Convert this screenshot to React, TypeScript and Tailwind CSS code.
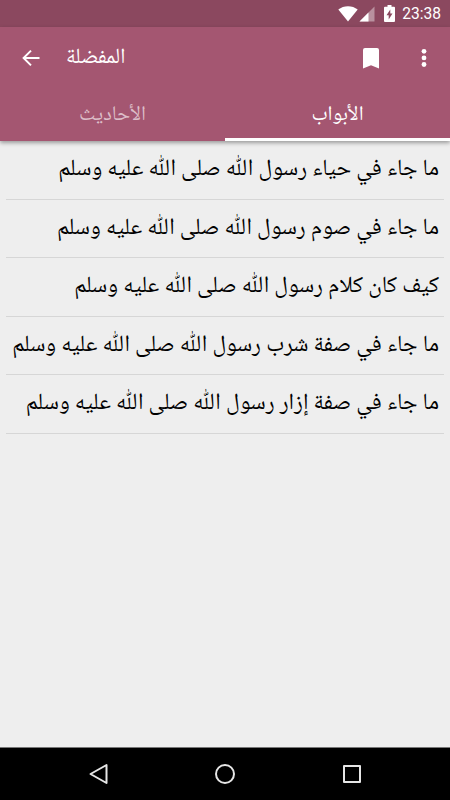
interface TabProps {
  label: string;
  active?: boolean;
}

const chapters: string[] = [
  "ما جاء في حياء رسول اللّٰه صلى اللّٰه عليه وسلم",
  "ما جاء في صوم رسول اللّٰه صلى اللّٰه عليه وسلم",
  "كيف كان كلام رسول اللّٰه صلى اللّٰه عليه وسلم",
  "ما جاء في صفة شرب رسول اللّٰه صلى اللّٰه عليه وسلم",
  "ما جاء في صفة إزار رسول اللّٰه صلى اللّٰه عليه وسلم",
];

function StatusBar() {
  return (
    <div className="flex h-[27px] shrink-0 items-center justify-end bg-[#8b485f] pr-[9px] text-white">
      <svg width="20" height="16" viewBox="0 0 20 16" fill="currentColor">
        <path d="M10 15.5 0.3 3.6C3 1.5 6.4 0.3 10 0.3s7 1.2 9.7 3.3z" />
      </svg>
      <svg className="ml-[1px]" width="16" height="16" viewBox="0 0 16 16" fill="currentColor">
        <path d="M15.5 0.5v15H0.5z" opacity="0.4" />
        <path d="M9.5 6.5v9h-9z" />
      </svg>
      <svg className="ml-[9px]" width="11" height="17" viewBox="0 0 11 17">
        <path d="M3.5 0h4v1.8H10q1 0 1 1V16q0 1-1 1H1q-1 0-1-1V2.8q0-1 1-1h2.5z" fill="white" />
        <path d="M6.3 4.5v4h2.2l-3.8 6v-4.3H2.5z" fill="#8b485f" />
      </svg>
      <span className="ml-[7px] pt-[2px] font-[Roboto,sans-serif] text-[15.6px] leading-none">
        23:38
      </span>
    </div>
  );
}

function Toolbar() {
  return (
    <div className="flex h-[62px] shrink-0 items-center pr-[16px] pl-[19px] text-white">
      <svg width="24" height="24" viewBox="0 0 24 24" fill="currentColor">
        <path d="M20.5 11H7l5.7-5.7-1.4-1.4L3.2 12l8.1 8.1 1.4-1.4L7 13h13.5z" />
      </svg>
      <h1 className="ml-[23px] flex-1 pt-px text-left text-[21.8px] leading-[30px]" dir="rtl">
        المفضلة
      </h1>
      <svg width="16" height="21" viewBox="0 0 16 21" fill="currentColor">
        <path d="M2 0h12q2 0 2 2v18.5l-8-3.3-8 3.3V2q0-2 2-2z" />
      </svg>
      <svg className="ml-[35px]" width="20" height="20" viewBox="0 0 20 20" fill="currentColor">
        <circle cx="10" cy="3.3" r="2.4" />
        <circle cx="10" cy="9.9" r="2.4" />
        <circle cx="10" cy="16.5" r="2.4" />
      </svg>
    </div>
  );
}

function Tab({ label, active }: TabProps) {
  return (
    <div
      className={
        active
          ? "flex flex-1 justify-center border-b-[3px] border-white pt-[12px] text-white"
          : "flex flex-1 justify-center border-b-[3px] border-transparent pt-[12px] text-[#dcbdc8]"
      }
    >
      <span className="text-[20.8px] leading-[30px]">{label}</span>
    </div>
  );
}

function NavigationBar() {
  return (
    <div className="flex h-[53px] shrink-0 items-center justify-between border-t border-[#777] bg-black px-[88px] text-[#e6e6e6]">
      <svg width="20" height="22" viewBox="0 0 20 22" fill="none" stroke="currentColor" strokeWidth="2" strokeLinejoin="round">
        <path d="M18.5 2v18L2.5 11z" />
      </svg>
      <svg width="20" height="20" viewBox="0 0 20 20" fill="none" stroke="currentColor" strokeWidth="2">
        <circle cx="10" cy="10" r="9" />
      </svg>
      <svg width="20" height="20" viewBox="0 0 20 20" fill="none" stroke="currentColor" strokeWidth="2" strokeLinejoin="round">
        <rect x="2" y="2" width="16" height="16" />
      </svg>
    </div>
  );
}

export default function App() {
  return (
    <div className="flex h-screen w-full flex-col overflow-hidden bg-[#eee] font-['Noto_Naskh_Arabic','Noto_Sans_Arabic','DejaVu_Sans',sans-serif]">
      <StatusBar />
      <header className="z-10 flex h-[114px] shrink-0 flex-col bg-[#a45671] shadow-[0_2px_4px_rgba(0,0,0,0.35)]">
        <Toolbar />
        <div className="flex flex-1">
          <Tab label="الأحاديث" />
          <Tab label="الأبواب" active />
        </div>
      </header>
      <main className="flex-1 px-[6px]" dir="rtl">
        {chapters.map((chapter) => (
          <div
            key={chapter}
            className="flex h-[58.5px] items-center border-b border-[#d6d6d6] pt-px pr-[5px] text-[23.1px] leading-[40px] whitespace-nowrap text-black"
          >
            {chapter}
          </div>
        ))}
      </main>
      <NavigationBar />
    </div>
  );
}
